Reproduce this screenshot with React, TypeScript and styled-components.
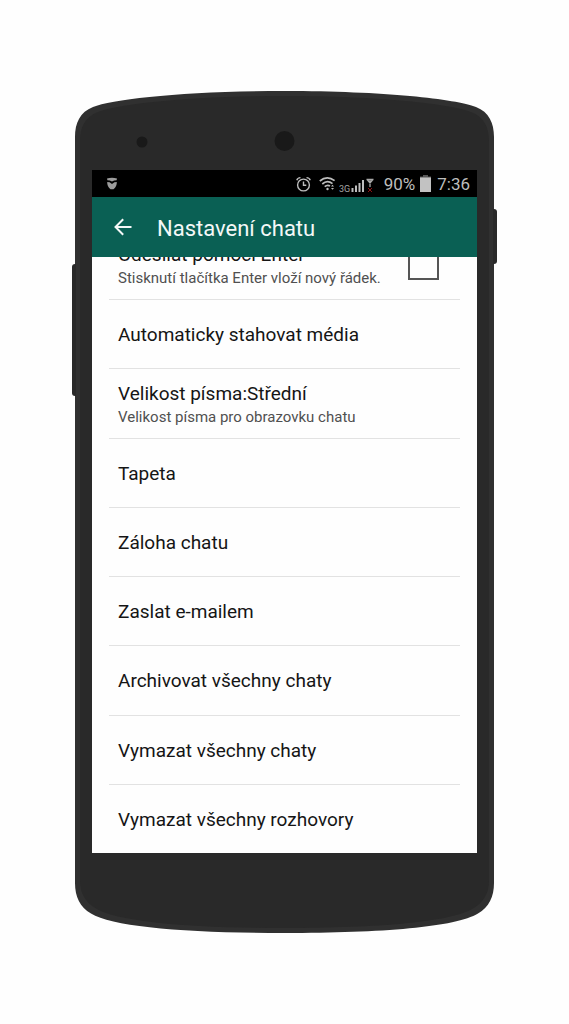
import React from 'react';
import styled, { createGlobalStyle } from 'styled-components';

const GlobalStyle = createGlobalStyle`
  * { box-sizing: border-box; }
  body {
    margin: 0;
    background: #fefefe;
    font-family: Roboto, "Noto Sans", sans-serif;
  }
`;

const Page = styled.main`
  display: flex;
  justify-content: center;
  padding: 91px 72px;
`;

const Phone = styled.div`
  position: relative;
  width: 100%;
  max-width: 419px;
  margin: 0 3px;
`;

const Cap = styled.svg`
  display: block;
  width: 100%;
`;

const Body = styled.div`
  background: #292929;
  border: solid #303030;
  border-width: 0 5px;
  padding: 0 12px;
`;

const SideKey = styled.span<{ $side: 'left' | 'right'; $top: number; $length: number }>`
  position: absolute;
  top: ${(p) => p.$top}px;
  ${(p) => p.$side}: -3px;
  width: 4px;
  height: ${(p) => p.$length}px;
  background: #292929;
  border-radius: ${(p) => (p.$side === 'left' ? '3px 0 0 3px' : '0 3px 3px 0')};
`;

const Screen = styled.section`
  display: flex;
  flex-direction: column;
  min-height: 683px;
  background: #fefefe;
`;

const StatusBar = styled.div`
  display: flex;
  align-items: center;
  height: 27px;
  padding: 0 7px 0 14px;
  background: #000;
  color: #bdbdbd;
  font-size: 17px;
  line-height: 27px;

  svg { display: block; flex: none; }
`;

const StatusIcons = styled.div`
  display: flex;
  align-items: center;
  margin-left: auto;
`;

const StatusText = styled.span<{ $gap: number }>`
  margin-left: ${(p) => p.$gap}px;
  padding-top: 1px;
`;

const Gap = styled.span<{ $width: number }>`
  flex: none;
  width: ${(p) => p.$width}px;
`;

const AppBar = styled.header`
  position: relative;
  z-index: 1;
  display: flex;
  align-items: center;
  height: 60px;
  padding: 0 16px 0 18px;
  gap: 22px;
  background: #0a6054;
  color: #f4f8f7;
`;

const BackButton = styled.button`
  display: flex;
  align-items: center;
  justify-content: center;
  width: 25px;
  height: 40px;
  padding: 0;
  border: 0;
  background: none;
  color: inherit;
`;

const Title = styled.h1`
  margin: 0;
  padding-top: 3px;
  font-size: 22px;
  font-weight: 400;
  line-height: 30px;
`;

const Viewport = styled.div`
  display: flex;
  flex: 1;
  overflow: hidden;
`;

const SettingsList = styled.ul`
  display: flex;
  flex-direction: column;
  flex: 1;
  margin: -26px 17px -1px;
  padding: 0;
  list-style: none;
`;

const Item = styled.li`
  display: flex;
  flex: 1 0 69px;
  border-bottom: 1px solid #e2e2e2;

  &:last-child { border-bottom-color: transparent; }
`;

const RowButton = styled.button`
  display: flex;
  flex-direction: column;
  justify-content: center;
  flex: 1;
  padding: 0 9px;
  border: 0;
  background: none;
  font: inherit;
  text-align: left;
`;

const RowLabel = styled.label`
  display: flex;
  align-items: center;
  justify-content: space-between;
  flex: 1;
  padding: 0 21px 0 9px;
`;

const Texts = styled.span<{ $single: boolean }>`
  display: flex;
  flex-direction: column;
  padding-top: ${(p) => (p.$single ? 2 : 0)}px;
`;

const Name = styled.span`
  color: #151515;
  font-size: 19px;
  line-height: 26px;
  white-space: nowrap;
`;

const Hint = styled.span`
  color: #505050;
  font-size: 15px;
  line-height: 20px;
  white-space: nowrap;
`;

const Checkbox = styled.input`
  appearance: none;
  flex: none;
  width: 31px;
  height: 30px;
  margin: 0;
  border: 2px solid #555;
  background: #fefefe;
`;

const settings: { name: string; hint?: string; checkbox?: boolean }[] = [
  { name: 'Odesílat pomocí Enter', hint: 'Stisknutí tlačítka Enter vloží nový řádek.', checkbox: true },
  { name: 'Automaticky stahovat média' },
  { name: 'Velikost písma:Střední', hint: 'Velikost písma pro obrazovku chatu' },
  { name: 'Tapeta' },
  { name: 'Záloha chatu' },
  { name: 'Zaslat e-mailem' },
  { name: 'Archivovat všechny chaty' },
  { name: 'Vymazat všechny chaty' },
  { name: 'Vymazat všechny rozhovory' },
];

const TopCap = () => (
  <Cap viewBox="0 0 419 79" height="79" preserveAspectRatio="none" aria-hidden="true">
    <path fill="#303030" d="M0 79V46C0 32 5 21 18 16C38 8 110 0 209.500 0C309 0 381 8 401 16C414 21 419 32 419 46V79Z" />
    <path fill="#292929" d="M5 79V50C5 36 10 26 23 21C43 13 114 5 209.500 5C305 5 376 13 396 21C409 26 414 36 414 50V79Z" />
    <circle cx="67" cy="51" r="5.500" fill="#191919" />
    <circle cx="209.500" cy="50" r="10" fill="#191919" />
  </Cap>
);

const BottomCap = () => (
  <Cap viewBox="0 0 419 80" height="80" preserveAspectRatio="none" aria-hidden="true">
    <path fill="#303030" d="M0 0V30C0 44 5 54 16 60.500C38 74 112 80 209.500 80C307 80 381 74 403 60.500C414 54 419 44 419 30V0Z" />
    <path fill="#292929" d="M5 0V28C5 40 10 49 21 55.500C43 69 116 75 209.500 75C303 75 376 69 398 55.500C409 49 414 40 414 28V0Z" />
  </Cap>
);

const ShieldIcon = () => (
  <svg width="12" height="13" viewBox="0 0 12 13" fill="#9c9c9c" aria-hidden="true">
    <path d="M1 1.500Q6 .2 11 1.500L10.600 3.200L8.200 3.400L6 4.500L3.800 3.400L1.400 3.200Z" />
    <path d="M1.200 5L3.600 5.200L6 7L8.400 5.200L10.800 5Q11 9.500 7.500 12.200H4.500Q1 9.500 1.200 5Z" />
  </svg>
);

const AlarmIcon = () => (
  <svg width="15" height="16" viewBox="0 0 15 16" fill="none" stroke="#bdbdbd" strokeWidth="1.400" aria-hidden="true">
    <circle cx="7.500" cy="9" r="5.900" />
    <path d="M7.500 5.500V9.300H10.300M.8 4.200Q1.500 1.800 4.500 1.600M14.200 4.200Q13.500 1.800 10.500 1.600" />
  </svg>
);

const WifiIcon = () => (
  <svg width="17" height="16" viewBox="0 0 17 16" fill="none" stroke="#bdbdbd" strokeWidth="1.700" aria-hidden="true">
    <path d="M.8 5Q8 -1.200 15.600 4.600M3.300 8Q8.300 3.600 13.500 7.700M5.700 10.600Q8.500 8.300 11 10" />
    <circle cx="8.500" cy="13" r="1.200" fill="#bdbdbd" stroke="none" />
    <path d="M12 10.500L13.500 8.800L15 10.500ZM12 12L13.500 13.700L15 12Z" fill="#bdbdbd" stroke="none" />
  </svg>
);

const SignalIcon = () => (
  <svg width="35" height="18" viewBox="0 0 35 18" aria-label="3G" role="img">
    <text x="0" y="17" fill="#a5a5a5" fontSize="9" fontFamily="Roboto, sans-serif">3G</text>
    <path d="M13.500 17V13M17 17V10.500M20.500 17V8M24 17V5" stroke="#bdbdbd" strokeWidth="2" />
    <path d="M27.500 4.500H34.500M31 12V4.500M28.500 5L31 8L33.500 5" stroke="#a8a8a8" strokeWidth="1.300" fill="none" />
    <path d="M29 13L33 17M33 13L29 17" stroke="#8f1414" strokeWidth="1" />
  </svg>
);

const BatteryIcon = () => (
  <svg width="11" height="17" viewBox="0 0 11 17" aria-hidden="true">
    <path d="M3 0H8V1.500H11V3H0V1.500H3Z" fill="#555" />
    <path d="M0 2.500H11V17H0Z" fill="#c2c2c2" />
  </svg>
);

const BackIcon = () => (
  <svg width="18" height="18" viewBox="0 0 18 18" fill="none" stroke="currentColor" strokeWidth="2" aria-hidden="true">
    <path d="M17.500 9H2M9.200 1.200L1.500 9L9.200 16.800" />
  </svg>
);

export default function App() {
  return (
    <>
      <GlobalStyle />
      <Page>
        <Phone>
          <SideKey $side="left" $top={173} $length={132} />
          <SideKey $side="right" $top={118} $length={55} />
          <TopCap />
          <Body>
            <Screen>
              <StatusBar>
                <ShieldIcon />
                <StatusIcons>
                  <AlarmIcon />
                  <Gap $width={8} />
                  <WifiIcon />
                  <Gap $width={3} />
                  <SignalIcon />
                  <StatusText $gap={10}>90%</StatusText>
                  <Gap $width={5} />
                  <BatteryIcon />
                  <StatusText $gap={6}>7:36</StatusText>
                </StatusIcons>
              </StatusBar>
              <AppBar>
                <BackButton type="button" aria-label="Zpět">
                  <BackIcon />
                </BackButton>
                <Title>Nastavení chatu</Title>
              </AppBar>
              <Viewport>
                <SettingsList>
                  {settings.map(({ name, hint, checkbox }) => {
                    const texts = (
                      <Texts $single={!hint}>
                        <Name>{name}</Name>
                        {hint && <Hint>{hint}</Hint>}
                      </Texts>
                    );
                    return (
                      <Item key={name}>
                        {checkbox ? (
                          <RowLabel>
                            {texts}
                            <Checkbox type="checkbox" />
                          </RowLabel>
                        ) : (
                          <RowButton type="button">{texts}</RowButton>
                        )}
                      </Item>
                    );
                  })}
                </SettingsList>
              </Viewport>
            </Screen>
          </Body>
          <BottomCap />
        </Phone>
      </Page>
    </>
  );
}
